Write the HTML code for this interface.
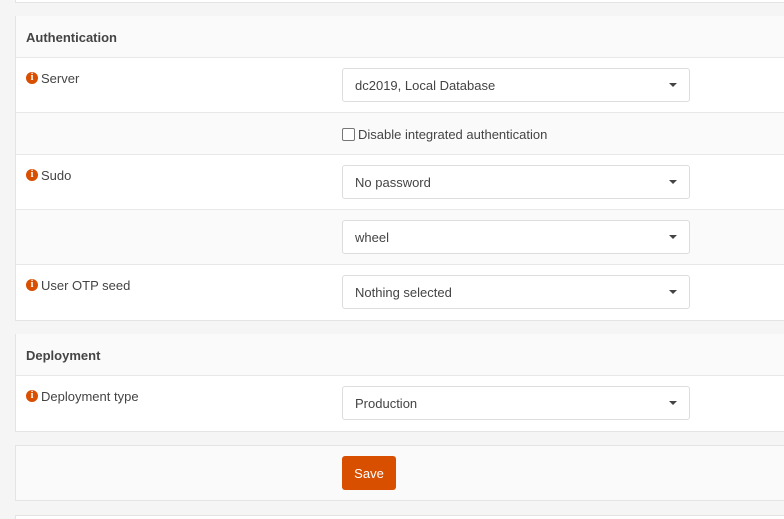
<!DOCTYPE html>
<html><head><style>
html,body{margin:0;width:784px;height:519px;overflow:hidden}
body{background:#f5f5f5;font-family:"Liberation Sans",sans-serif;font-size:13px;color:#444;position:relative}
.p{position:absolute;left:15px;width:800px;border:1px solid #e4e4e4;border-right:none;box-sizing:border-box}
.r{position:absolute;left:0;right:0;border-top:1px solid #e8e8e8;box-sizing:border-box}
.w{background:#fff}.g{background:#fafafa}
.h{font-weight:bold;color:#444;position:absolute;left:10px}
.lb{position:absolute;left:25px;top:13px;line-height:15px}
.i{position:absolute;left:-15px;top:1px;width:12px;height:12px;border-radius:50%;background:#d94f00;color:#fff;font-size:10px;font-weight:bold;text-align:center;line-height:12px;font-family:"Liberation Serif",serif}
.s{position:absolute;left:326px;width:348px;height:34px;border:1px solid #ddd;border-radius:3px;background:#fff;box-sizing:border-box;padding:0 12px;line-height:34px}
.s:after{content:"";position:absolute;right:12px;top:14px;border-left:4px solid transparent;border-right:4px solid transparent;border-top:4px solid #444}
</style></head><body>
<div class="p w" style="top:-10px;height:13px"></div>
<div class="p" style="top:16px;height:305px">
 <div class="r g" style="top:-1px;height:42px;border-top:none"><span class="h" style="top:14px">Authentication</span></div>
 <div class="r w" style="top:40px;height:56px"><span class="lb"><span class="i">i</span>Server</span><div class="s" style="top:10px">dc2019, Local Database</div></div>
 <div class="r g" style="top:95px;height:43px"><span style="position:absolute;left:326px;top:14px"><span style="display:inline-block;width:11px;height:11px;border:1px solid #777;border-radius:2px;vertical-align:-2px;margin-right:3px;background:#fff"></span>Disable integrated authentication</span></div>
 <div class="r w" style="top:137px;height:56px"><span class="lb"><span class="i">i</span>Sudo</span><div class="s" style="top:10px">No password</div></div>
 <div class="r g" style="top:192px;height:56px"><div class="s" style="top:10px">wheel</div></div>
 <div class="r w" style="top:247px;height:56px"><span class="lb"><span class="i">i</span>User OTP seed</span><div class="s" style="top:10px">Nothing selected</div></div>
</div>
<div class="p" style="top:334px;height:98px">
 <div class="r g" style="top:-1px;height:42px;border-top:none"><span class="h" style="top:14px">Deployment</span></div>
 <div class="r w" style="top:40px;height:56px"><span class="lb"><span class="i">i</span>Deployment type</span><div class="s" style="top:10px">Production</div></div>
</div>
<div class="p g" style="top:445px;height:56px">
 <div style="position:absolute;left:326px;top:10px;width:54px;height:34px;background:#d94f00;border-radius:3px;color:#fff;text-align:center;line-height:35px">Save</div>
</div>
<div class="p w" style="top:515px;height:20px"></div>
</body></html>
